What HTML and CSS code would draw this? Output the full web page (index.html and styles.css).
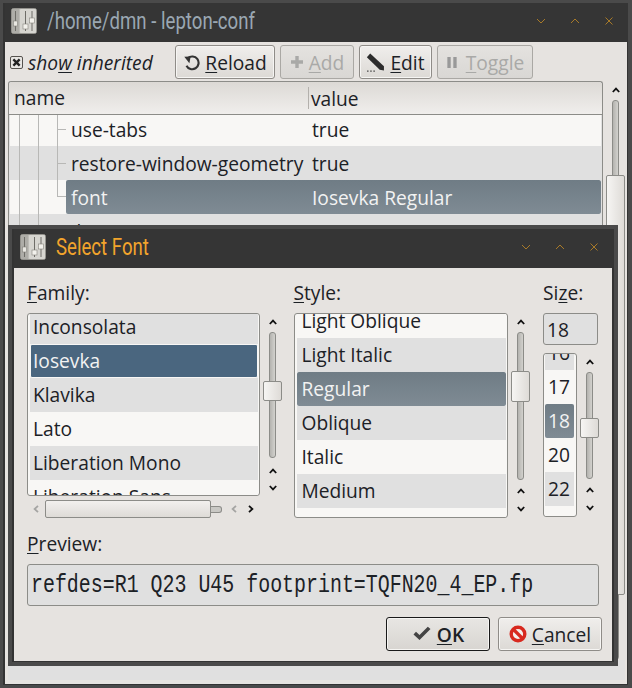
FILE: index.html
```html
<!DOCTYPE html>
<html lang="en">
<head>
    <meta charset="UTF-8">
    <title>lepton-conf</title>
    <link rel="stylesheet" href="styles.css">
</head>
<body>
    <svg class="defs" width="0" height="0">
        <symbol id="tile" viewBox="0 0 26 26">
            <rect x="0.5" y="0.5" width="25" height="25" rx="2" fill="#bdbcb7" stroke="#94938e"/>
            <rect x="9" y="1" width="16" height="24" rx="1" fill="#d6d5d0"/>
            <rect x="1" y="1" width="7" height="24" fill="#aeada8"/>
            <path d="M4.5 3v20M14.5 3v20M21 3v20" stroke="#6e6d68"/>
            <rect x="2.5" y="13" width="4" height="5" fill="#e8e7e2" stroke="#85847e" stroke-width=".6"/>
            <rect x="12" y="16" width="5" height="5" fill="#f2f1ec" stroke="#85847e" stroke-width=".6"/>
            <rect x="18.5" y="10" width="5" height="5" fill="#f2f1ec" stroke="#85847e" stroke-width=".6"/>
        </symbol>
        <symbol id="up" viewBox="0 0 8 6"><path d="M.8 5 4 1.6 7.2 5" fill="none" stroke="currentColor" stroke-width="1.8"/></symbol>
        <symbol id="down" viewBox="0 0 8 6"><path d="M.8 1 4 4.4 7.2 1" fill="none" stroke="currentColor" stroke-width="1.8"/></symbol>
        <symbol id="left" viewBox="0 0 6 8"><path d="M5 .8 1.6 4 5 7.2" fill="none" stroke="currentColor" stroke-width="1.8"/></symbol>
        <symbol id="right" viewBox="0 0 6 8"><path d="M1 .8 4.4 4 1 7.2" fill="none" stroke="currentColor" stroke-width="1.8"/></symbol>
        <symbol id="wm-min" viewBox="0 0 10 10"><path d="M1 3 5 7 9 3" fill="none" stroke="currentColor"/></symbol>
        <symbol id="wm-max" viewBox="0 0 10 10"><path d="M1 7 5 3 9 7" fill="none" stroke="currentColor"/></symbol>
        <symbol id="wm-close" viewBox="0 0 10 10"><path d="M1.5 1.5 8.5 8.5M8.5 1.5 1.5 8.5" fill="none" stroke="currentColor"/></symbol>
    </svg>

    <div class="desktop">
        <div class="window">
            <div class="frame">
                <header class="titlebar">
                    <svg class="tile"><use href="#tile"/></svg>
                    <span class="title">/home/dmn - lepton-conf</span>
                    <div class="wm-buttons">
                        <svg><use href="#wm-min"/></svg>
                        <svg><use href="#wm-max"/></svg>
                        <svg><use href="#wm-close"/></svg>
                    </div>
                </header>
                <main class="main">
                    <div class="toolbar">
                        <label class="check">
                            <span class="checkbox">
                                <svg viewBox="0 0 10 10"><path d="M1.5 1.5 8.5 8.5M8.5 1.5 1.5 8.5" stroke="#222" stroke-width="2.6"/></svg>
                            </span>
                            <span>sho<u>w</u> inherited</span>
                        </label>
                        <button class="btn btn-reload">
                            <svg viewBox="0 0 16 16"><path d="M4.6 3.9A6 6 0 1 1 3.3 11" fill="none" stroke="#333" stroke-width="2"/><path d="M1.2 2.6 7.2 2.4 6 8.6Z" fill="#333"/></svg>
                            <span><u>R</u>eload</span>
                        </button>
                        <button class="btn btn-add" disabled>
                            <svg viewBox="0 0 14 14"><path d="M7 1v12M1 7h12" stroke="#a9a9a7" stroke-width="3.4"/></svg>
                            <span><u>A</u>dd</span>
                        </button>
                        <button class="btn btn-edit">
                            <svg viewBox="0 0 18 18"><path d="M4 .5 17 12.5 17 16.5 13 15.8 .8 4Z" fill="#2c2c2c"/><path d="M1 17.2h1.4M4 17.2h1.4M7 17.2h1.4" stroke="#444" stroke-width="1.2"/></svg>
                            <span><u>E</u>dit</span>
                        </button>
                        <button class="btn btn-toggle" disabled>
                            <svg viewBox="0 0 12 14"><path d="M1 1h3.6v12H1zM7.4 1H11v12H7.4z" fill="#999"/></svg>
                            <span><u>T</u>oggle</span>
                        </button>
                    </div>

                    <div class="tree-area">
                        <div class="tree">
                            <div class="tree-head">
                                <span class="col-name">name</span>
                                <span class="col-value">value</span>
                            </div>
                            <div class="tree-row first">
                                <i class="guide"></i><i class="guide"></i><i class="guide tee"></i>
                                <div class="cell"><span class="cell-name">use-tabs</span><span>true</span></div>
                            </div>
                            <div class="tree-row alt">
                                <i class="guide"></i><i class="guide"></i><i class="guide tee"></i>
                                <div class="cell"><span class="cell-name">restore-window-geometry</span><span>true</span></div>
                            </div>
                            <div class="tree-row current">
                                <i class="guide"></i><i class="guide"></i><i class="guide elbow"></i>
                                <div class="cell"><span class="cell-name">font</span><span>Iosevka Regular</span></div>
                            </div>
                            <div class="tree-row alt">
                                <i class="guide"></i><i class="guide short"></i>
                                <div class="cell"><span class="cell-name">[schematic.gui]</span></div>
                            </div>
                        </div>
                        <div class="vscroll vscroll-main">
                            <span class="arrow"><svg><use href="#up"/></svg></span>
                            <div class="groove"><div class="thumb" style="top:74px;height:420px"></div></div>
                        </div>
                    </div>
                    <div class="tree-foot"></div>
                </main>
            </div>
        </div>

        <div class="window dialog">
            <div class="frame">
                <header class="titlebar">
                    <svg class="tile"><use href="#tile"/></svg>
                    <span class="title title-active">Select Font</span>
                    <div class="wm-buttons">
                        <svg><use href="#wm-min"/></svg>
                        <svg><use href="#wm-max"/></svg>
                        <svg><use href="#wm-close"/></svg>
                    </div>
                </header>
                <main class="dialog-body">
                    <div class="pickers">
                        <section class="col-family">
                            <div class="field-label"><u>F</u>amily:</div>
                            <div class="list-wrap">
                                <ul class="listbox">
                                    <li class="alt">Inconsolata</li>
                                    <li class="picked">Iosevka</li>
                                    <li class="alt">Klavika</li>
                                    <li>Lato</li>
                                    <li class="alt">Liberation Mono</li>
                                    <li>Liberation Sans</li>
                                </ul>
                                <div class="vscroll">
                                    <span class="arrow"><svg><use href="#up"/></svg></span>
                                    <div class="groove"><div class="thumb" style="top:48px;height:20px"></div></div>
                                    <span class="arrow arrow-gap"><svg><use href="#up"/></svg></span>
                                    <span class="arrow"><svg><use href="#down"/></svg></span>
                                </div>
                            </div>
                            <div class="hscroll">
                                <svg class="h-arrow off"><use href="#left"/></svg>
                                <div class="h-thumb"></div>
                                <div class="h-groove"></div>
                                <svg class="h-arrow off"><use href="#left"/></svg>
                                <svg class="h-arrow"><use href="#right"/></svg>
                            </div>
                        </section>

                        <section class="col-style">
                            <div class="field-label"><u>S</u>tyle:</div>
                            <div class="list-wrap">
                                <ul class="listbox listbox-style">
                                    <li>Light Oblique</li>
                                    <li class="alt">Light Italic</li>
                                    <li class="current">Regular</li>
                                    <li class="alt">Oblique</li>
                                    <li>Italic</li>
                                    <li class="alt">Medium</li>
                                    <li>Medium Oblique</li>
                                </ul>
                                <div class="vscroll">
                                    <span class="arrow"><svg><use href="#up"/></svg></span>
                                    <div class="groove"><div class="thumb" style="top:38px;height:31px"></div></div>
                                    <span class="arrow arrow-gap"><svg><use href="#up"/></svg></span>
                                    <span class="arrow"><svg><use href="#down"/></svg></span>
                                </div>
                            </div>
                        </section>

                        <section class="col-size">
                            <div class="field-label">Si<u>z</u>e:</div>
                            <div class="entry entry-size">18</div>
                            <div class="list-wrap list-wrap-size">
                                <ul class="listbox listbox-size">
                                    <li class="alt">16</li>
                                    <li>17</li>
                                    <li class="current">18</li>
                                    <li>20</li>
                                    <li class="alt">22</li>
                                    <li>24</li>
                                </ul>
                                <div class="vscroll">
                                    <span class="arrow"><svg><use href="#up"/></svg></span>
                                    <div class="groove"><div class="thumb" style="top:45px;height:20px"></div></div>
                                    <span class="arrow arrow-gap"><svg><use href="#up"/></svg></span>
                                    <span class="arrow"><svg><use href="#down"/></svg></span>
                                </div>
                            </div>
                        </section>
                    </div>

                    <div class="field-label preview-label"><u>P</u>review:</div>
                    <div class="entry entry-preview"><span class="mono">refdes=R1 Q23 U45 footprint=TQFN20_4_EP.fp</span></div>

                    <div class="actions">
                        <button class="btn btn-dialog btn-default">
                            <svg viewBox="0 0 20 16"><path d="M1.5 8.5 7.5 14 18.5 3 15.8.8 7.5 9 4 5.8Z" fill="#444"/></svg>
                            <span class="ok-text"><u>O</u>K</span>
                        </button>
                        <button class="btn btn-dialog">
                            <svg viewBox="0 0 18 18"><circle cx="9" cy="9" r="6.8" fill="#f4efec" stroke="#d8291f" stroke-width="3.4"/><path d="M4.5 4.5 13.5 13.5" stroke="#d8291f" stroke-width="3.2"/></svg>
                            <span><u>C</u>ancel</span>
                        </button>
                    </div>
                </main>
            </div>
        </div>
    </div>
</body>
</html>
```

FILE: styles.css
```css
* {
    box-sizing: border-box;
}
body {
    margin: 0;
    background-color: #4a4a4a;
    font-family: "Open Sans", "Noto Sans", sans-serif;
    font-size: 19.2px;
    color: #1c2126;
}
.defs {
    position: absolute;
}
u {
    text-underline-offset: 2px;
}
.desktop {
    position: relative;
    width: 632px;
    height: 688px;
    overflow: hidden;
}

/* window decoration */
.window {
    width: 632px;
    height: 688px;
    padding: 3px 4px 3px 3px;
    background-color: #4a4a4a;
}
.frame {
    position: relative;
    display: flex;
    flex-direction: column;
    height: 100%;
    border-style: solid;
    border-color: #333333;
    border-width: 0 1px 1px 2px;
    background-color: #e6e3e0;
}
.titlebar {
    display: flex;
    align-items: center;
    flex: none;
    height: 39px;
    margin-right: -1px;
    padding-left: 6px;
    background-color: #353535;
}
.tile {
    width: 26px;
    height: 26px;
    flex: none;
    margin-bottom: 4px;
}
.title {
    margin-left: 10px;
    font-family: "Roboto", sans-serif;
    font-size: 23px;
    color: #9aa7b2;
    transform: translateY(-1px) scaleX(.81);
    transform-origin: left center;
    white-space: nowrap;
}
.title-active {
    color: #f2a42c;
}
.wm-buttons {
    display: flex;
    gap: 24px;
    margin-left: auto;
    margin-right: 14px;
    margin-bottom: 3px;
    color: #a87a28;
}
.wm-buttons svg {
    width: 10px;
    height: 10px;
}

/* main window */
.main {
    display: flex;
    flex-direction: column;
    flex: 1;
    min-height: 0;
    padding: 3px 1px 4px 3px;
}
.toolbar {
    display: flex;
    align-items: center;
    flex: none;
    height: 34px;
    gap: 5px;
    margin-bottom: 2px;
}
.check {
    display: flex;
    align-items: center;
    gap: 5px;
    width: 155px;
    margin-left: 2px;
    margin-right: 5px;
    font-style: italic;
    white-space: nowrap;
}
.checkbox {
    display: flex;
    flex: none;
    width: 13px;
    height: 13px;
    padding: 1px;
    border: 1px solid #55524e;
    border-radius: 2px;
    background-color: #e8e6e3;
}
.btn {
    display: flex;
    align-items: center;
    justify-content: center;
    gap: 5px;
    height: 34px;
    padding: 0;
    border: 1px solid #8f8c88;
    border-radius: 3px;
    background: linear-gradient(#f0eeec, #dcd9d5);
    box-shadow: inset 0 0 0 1px #f6f5f3;
    font-family: inherit;
    font-size: 19.2px;
    color: #1c2126;
}
.btn[disabled] {
    background: linear-gradient(#e4e2df, #d9d7d4);
    box-shadow: none;
    border-color: #aaa8a4;
    color: #a9a9a7;
}
.btn-reload { width: 100px; }
.btn-reload svg { width: 17px; height: 17px; }
.btn-add { width: 74px; }
.btn-add svg { width: 14px; height: 14px; }
.btn-edit { width: 73px; }
.btn-edit svg { width: 19px; height: 19px; }
.btn-toggle { width: 96px; gap: 8px; }
.btn-toggle svg { width: 12px; height: 13px; }

.tree-area {
    display: flex;
    flex: 1;
    min-height: 0;
}
.tree {
    flex: none;
    width: 595px;
    padding: 0 1px;
    border: 1px solid #8c8c88;
    border-bottom: 0;
    border-radius: 3px 3px 0 0;
    background-color: #e0e0e0;
    overflow: hidden;
}
.tree-head {
    position: relative;
    z-index: 1;
    display: flex;
    align-items: center;
    height: 33px;
    margin: 0 -1px;
    padding-left: 5px;
    border-bottom: 1px solid #8c8c88;
    border-radius: 3px 3px 0 0;
    background: linear-gradient(#dcd9d5, #f0eeec);
}
.col-name {
    width: 295px;
    height: 22px;
    line-height: 22px;
    border-right: 1px solid #b3b0ac;
}
.col-value {
    padding-left: 2px;
}
.tree-row {
    display: flex;
    height: 34px;
    padding-left: 9px;
    background-color: #f8f7f5;
}
.tree-row.first {
    margin-top: -3px;
}
.tree-row.alt {
    background-color: #e0e0e0;
}
.guide {
    flex: none;
    width: 19px;
    border-left: 1px solid #b8b8b6;
}
.guide.tee {
    width: 9px;
    background: linear-gradient(#b8b8b6, #b8b8b6) no-repeat 0 50% / 100% 1px;
}
.guide.elbow {
    width: 9px;
    height: 50%;
    border-bottom: 1px solid #b8b8b6;
}
.guide.short {
    width: 9px;
}
.cell {
    display: flex;
    align-items: center;
    flex: 1;
    padding-left: 5px;
    border-radius: 2px;
    white-space: nowrap;
}
.cell-name {
    width: 241px;
    flex: none;
}
.tree-row.current .cell {
    background: linear-gradient(#6f7c85, #7f8b94);
    color: #f2f2f2;
}
.tree-foot {
    flex: none;
    height: 20px;
    margin-right: 1px;
    background-color: #e0e0e0;
}

/* scrollbars */
.vscroll {
    display: flex;
    flex-direction: column;
    align-items: center;
    flex: none;
    width: 19px;
    margin-left: 3px;
    color: #111111;
}
.arrow {
    display: flex;
    align-items: center;
    justify-content: center;
    flex: none;
    width: 100%;
    height: 18px;
}
.arrow svg {
    width: 8px;
    height: 6px;
}
.arrow-gap {
    margin-top: 2px;
}
.col-family .arrow-gap {
    margin-top: 4px;
}
.col-family .arrow-gap,
.col-family .arrow-gap + .arrow {
    height: 17px;
}
.groove {
    position: relative;
    flex: 1;
    width: 7px;
    margin-top: 1px;
    border: 1px solid #8c8c88;
    border-radius: 3px;
    background: linear-gradient(90deg, #b4b3af, #d2d1cd);
}
.thumb {
    position: absolute;
    left: -7px;
    width: 19px;
    border: 1px solid #8c8c88;
    border-radius: 2px;
    background: linear-gradient(90deg, #f6f5f3, #dedbd7);
}
.vscroll-main {
    height: 100%;
}
.hscroll {
    display: flex;
    align-items: center;
    height: 18px;
    margin-top: 4px;
    margin-left: 6px;
    color: #111111;
}
.h-arrow {
    width: 6px;
    height: 8px;
    flex: none;
}
.h-arrow.off {
    color: #a5a5a3;
}
.h-thumb {
    width: 166px;
    height: 18px;
    margin-left: 6px;
    border: 1px solid #8c8c88;
    border-radius: 2px;
    background: linear-gradient(#f2f0ee, #dedbd7);
}
.h-groove {
    width: 11px;
    height: 7px;
    margin-right: 9px;
    border: 1px solid #8c8c88;
    border-left: 0;
    border-radius: 0 3px 3px 0;
    background: #c9c8c4;
}
.h-groove + .h-arrow {
    margin-right: 11px;
}

/* font dialog */
.dialog {
    position: absolute;
    left: 8px;
    top: 225px;
    width: 610px;
    height: 441px;
    padding: 4px;
}
.dialog .frame {
    border-width: 0 2px 1px 2px;
}
.dialog .titlebar {
    margin-right: -2px;
}
.dialog .wm-buttons {
    margin-right: 15px;
}
.dialog-body {
    flex: 1;
    padding: 13px 13px 0 13px;
}
.pickers {
    display: flex;
}
.field-label {
    height: 24px;
    margin-bottom: 8px;
    line-height: 24px;
}
.col-family {
    width: 267px;
}
.col-style {
    width: 250px;
}
.col-size {
    width: 56px;
}
.list-wrap {
    display: flex;
}
.listbox {
    flex: none;
    width: 233px;
    height: 183px;
    margin: 0;
    padding: 0 1px 0 2px;
    border: 1px solid #8c8c88;
    border-radius: 3px;
    background-color: #f8f7f5;
    overflow: hidden;
    list-style: none;
}
.listbox li {
    height: 34px;
    padding-left: 3px;
    line-height: 34px;
    white-space: nowrap;
    background-color: #f8f7f5;
}
.listbox li:first-child {
    margin-top: -4px;
}
.listbox li.alt {
    background-color: #e0e0e0;
}
.listbox li.picked {
    border: 1px solid #f8f7f5;
    border-radius: 2px;
    padding-left: 2px;
    line-height: 32px;
    background: #4a667f;
    color: #f2f2f2;
}
.listbox li.current {
    border-radius: 2px;
    background: linear-gradient(#6f7c85, #7f8b94);
    color: #f2f2f2;
}
.listbox-style {
    width: 214px;
    height: 205px;
    margin-left: 1px;
}
.listbox-style li {
    padding-left: 4px;
}
.listbox-style li:first-child {
    margin-top: -10px;
}
.listbox-size {
    width: 34px;
    height: 164px;
    padding: 0 2px 0 1px;
}
.listbox-size li:first-child {
    margin-top: -18px;
}
.entry {
    display: flex;
    align-items: center;
    border: 1px solid #8c8c88;
    border-radius: 3px;
    background-color: #e0e0e0;
}
.entry-size {
    width: 55px;
    height: 32px;
    margin-bottom: 8px;
    padding-left: 3px;
}
.preview-label {
    margin-top: 14px;
}
.entry-preview {
    width: 572px;
    height: 42px;
    padding-left: 3px;
}
.mono {
    display: inline-block;
    font-family: "Liberation Mono", monospace;
    font-size: 25px;
    white-space: pre;
    transform: scaleX(.797);
    transform-origin: left center;
}
.actions {
    display: flex;
    justify-content: flex-end;
    gap: 8px;
    margin-top: 11px;
    margin-right: -3px;
}
.btn-dialog {
    width: 104px;
}
.btn-dialog svg {
    width: 18px;
    height: 18px;
}
.btn-default {
    border-color: #1a1a1a;
    background: linear-gradient(#e8e6e3, #d8d5d1);
}
.btn-default svg {
    width: 20px;
    height: 16px;
}
.ok-text {
    font-weight: 600;
}
```
